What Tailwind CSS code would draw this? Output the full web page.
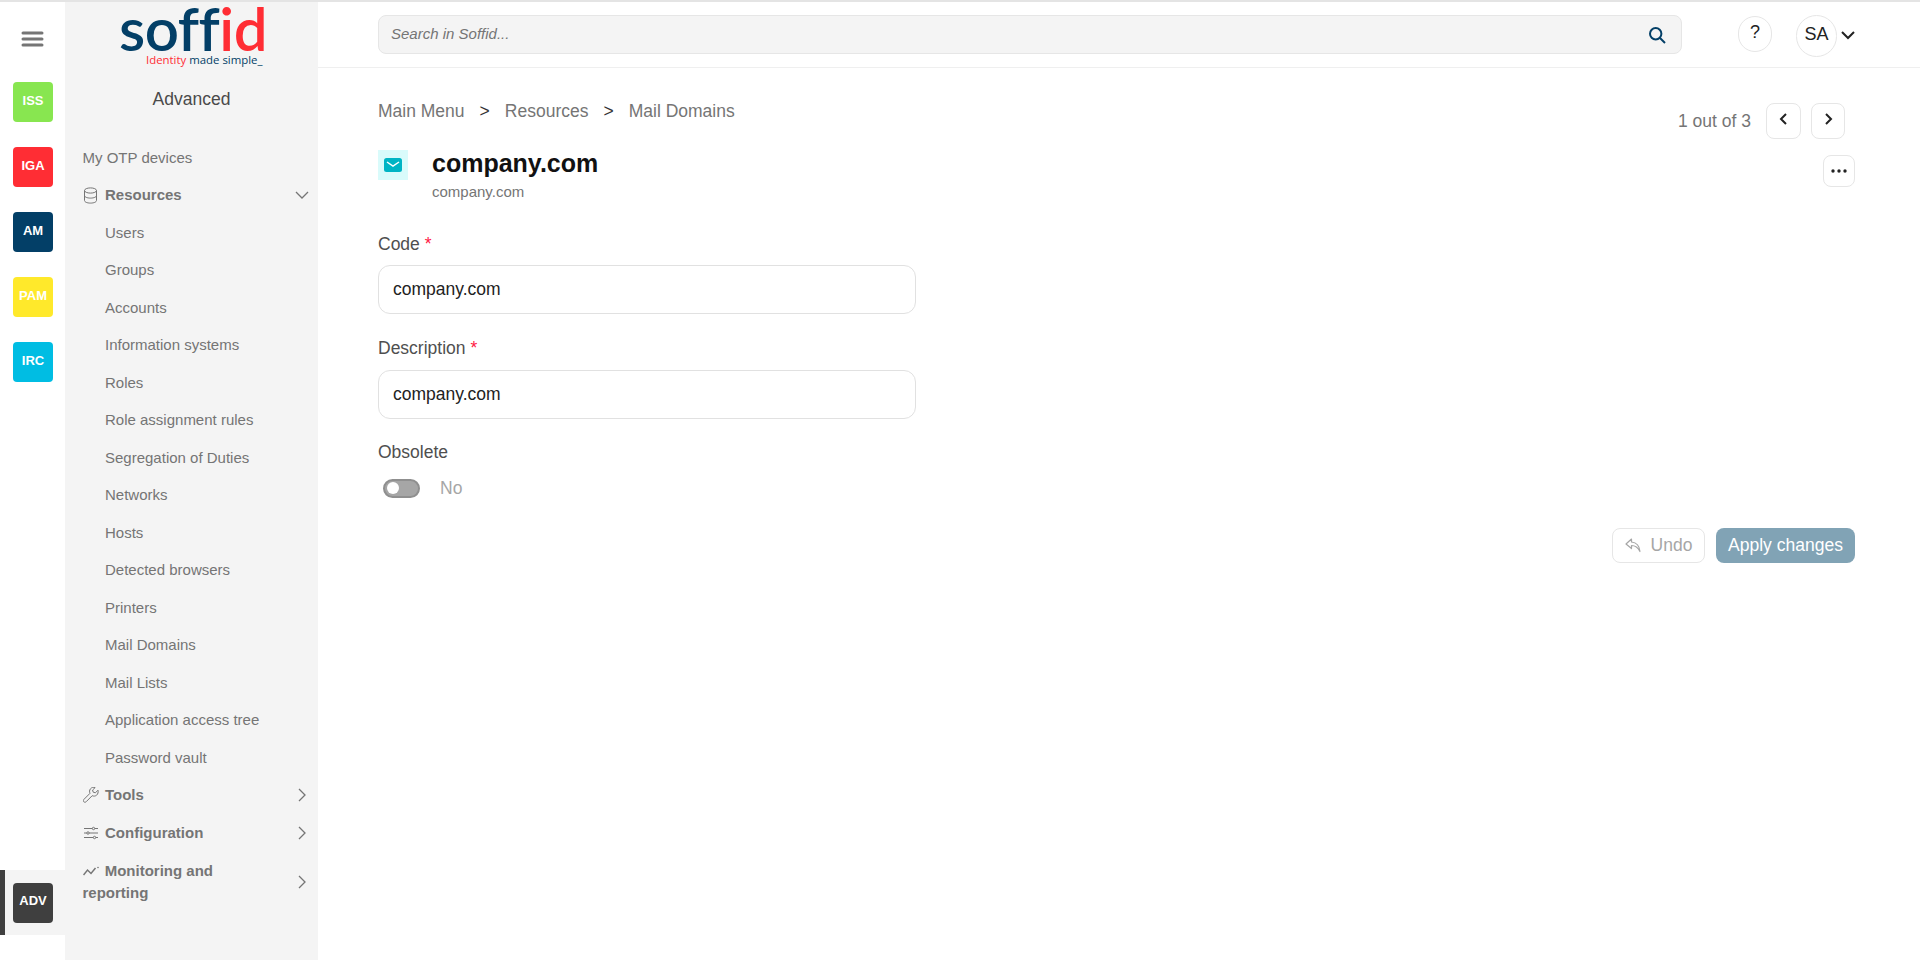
<!DOCTYPE html>
<html lang="en">
<head>
  <meta charset="UTF-8" />
  <title>Soffid - Mail Domains</title>
  <script src="https://cdn.jsdelivr.net/npm/@tailwindcss/browser@4"></script>
</head>
<body class="h-[960px] overflow-hidden bg-white font-['Liberation_Sans',Arial,sans-serif]">
  <div class="flex h-[960px] border-t-2 border-[#e4e4e4]">

    <!-- module rail -->
    <div class="w-[65px] shrink-0 flex flex-col pb-[25px]">
      <button class="h-[35px] mt-[19px] mb-[26px] flex items-center justify-center">
        <svg width="23" height="16" viewBox="0 0 23 16" fill="none" stroke="#757575" stroke-width="3" stroke-linecap="round"><path d="M2 2h19M2 8h19M2 14h19"/></svg>
      </button>
      <div class="flex flex-col gap-[25px] pl-[13px] text-[13px] font-bold text-white">
        <div class="w-10 h-10 rounded-[4px] bg-[#88e650] flex items-center justify-center pb-[3px]">ISS</div>
        <div class="w-10 h-10 rounded-[4px] bg-[#ff2d34] flex items-center justify-center pb-[3px]">IGA</div>
        <div class="w-10 h-10 rounded-[4px] bg-[#033f67] flex items-center justify-center pb-[3px]">AM</div>
        <div class="w-10 h-10 rounded-[4px] bg-[#ffe92b] flex items-center justify-center pb-[3px]">PAM</div>
        <div class="w-10 h-10 rounded-[4px] bg-[#00bde3] flex items-center justify-center pb-[3px]">IRC</div>
      </div>
      <div class="mt-auto h-[65px] bg-[#f4f4f4] border-l-[5px] border-[#3f3f3f] pl-2 flex items-center">
        <div class="w-10 h-10 rounded-[4px] bg-[#3f3f3f] flex items-center justify-center pb-[3px] text-[13px] font-bold text-white">ADV</div>
      </div>
    </div>

    <!-- sidebar -->
    <div class="w-[253px] shrink-0 bg-[#f4f4f4] text-[15px] text-[#757575]">
      <div class="h-[64px] relative">
        <div class="absolute left-[54px] top-[1px] font-['Lato',sans-serif] font-semibold text-[60px] leading-[50px] tracking-[-0.5px] text-[#033f67]">soff<span class="text-[#ff2d34]">id</span></div>
        <div class="absolute left-[81px] top-[51px] font-['Open_Sans',sans-serif] text-[11.4px] leading-[14px] whitespace-nowrap text-[#033f67]"><span class="text-[#ff2d34]">Identity</span> made simple_</div>
      </div>
      <div class="mt-[21px] text-center text-[17.5px] leading-[24px] text-[#4a4a4a]">Advanced</div>

      <div class="mt-[28px] pl-[17.5px]">
        <div class="h-[37.5px] flex items-center">My OTP devices</div>
        <div class="h-[37.5px] flex items-center font-bold">
          <svg class="w-[15px] h-[17px] mr-[7.5px]" viewBox="0 0 15 17" fill="none" stroke="#757575" stroke-width="1"><ellipse cx="7.5" cy="3.5" rx="6" ry="2.6"/><path d="M1.5 3.5v10c0 1.5 2.7 2.6 6 2.6s6-1.1 6-2.6v-10M1.5 8.5c0 1.5 2.7 2.6 6 2.6s6-1.1 6-2.6"/></svg>
          Resources
          <svg class="ml-auto mr-[9px]" width="14" height="8" viewBox="0 0 14 8" fill="none" stroke="#757575" stroke-width="1.3"><path d="M1 1l6 6 6-6"/></svg>
        </div>
        <div class="pl-[22.5px] flex flex-col">
          <div class="h-[37.5px] flex items-center">Users</div>
          <div class="h-[37.5px] flex items-center">Groups</div>
          <div class="h-[37.5px] flex items-center">Accounts</div>
          <div class="h-[37.5px] flex items-center">Information systems</div>
          <div class="h-[37.5px] flex items-center">Roles</div>
          <div class="h-[37.5px] flex items-center">Role assignment rules</div>
          <div class="h-[37.5px] flex items-center">Segregation of Duties</div>
          <div class="h-[37.5px] flex items-center">Networks</div>
          <div class="h-[37.5px] flex items-center">Hosts</div>
          <div class="h-[37.5px] flex items-center">Detected browsers</div>
          <div class="h-[37.5px] flex items-center">Printers</div>
          <div class="h-[37.5px] flex items-center">Mail Domains</div>
          <div class="h-[37.5px] flex items-center">Mail Lists</div>
          <div class="h-[37.5px] flex items-center">Application access tree</div>
          <div class="h-[37.5px] flex items-center">Password vault</div>
        </div>
        <div class="h-[37.5px] flex items-center font-bold">
          <svg class="w-[16px] h-[16px] mr-[6.5px]" viewBox="0 0 16 16" fill="none" stroke="#757575" stroke-width="1"><path d="M15 3.2l-2.6 2.6-2.2-.6-.6-2.2L12.200 .5c-1.800-.5-3.800 0-4.800 1.400-1 1.300-1.100 3-.4 4.400L1 12.300c-.8.800-.8 1.800-.2 2.500.7.600 1.700.6 2.400-.1l6-6c1.400.7 3.100.5 4.400-.5 1.300-1.100 1.900-3.100 1.400-5z"/></svg>
          Tools
          <svg class="ml-auto mr-[12px]" width="8" height="14" viewBox="0 0 8 14" fill="none" stroke="#757575" stroke-width="1.3"><path d="M1 1l6 6-6 6"/></svg>
        </div>
        <div class="h-[37.5px] flex items-center font-bold">
          <svg class="w-[16px] h-[14px] mr-[6.5px]" viewBox="0 0 16 14" fill="none" stroke="#757575" stroke-width="1"><path d="M1 2.500h14M1 7h14M1 11.500h14"/><circle cx="10.500" cy="2.500" r="1.200" fill="#f4f4f4"/><circle cx="5" cy="7" r="1.200" fill="#f4f4f4"/><circle cx="11.500" cy="11.500" r="1.200" fill="#f4f4f4"/></svg>
          Configuration
          <svg class="ml-auto mr-[12px]" width="8" height="14" viewBox="0 0 8 14" fill="none" stroke="#757575" stroke-width="1.3"><path d="M1 1l6 6-6 6"/></svg>
        </div>
        <div class="flex items-center pt-[8px] font-bold leading-[22px]">
          <div class="w-[200px]">
            <svg class="inline w-[16px] h-[10px] mr-[2px] align-[0px]" viewBox="0 0 16 10" fill="none" stroke="#757575" stroke-width="1.500"><path d="M.5 9l4-5 3.500 3.500 4.500-5.500"/><circle cx="15" cy="1.500" r=".8" fill="#757575" stroke="none"/></svg>
            Monitoring and reporting
          </div>
          <svg class="ml-auto mr-[12px]" width="8" height="14" viewBox="0 0 8 14" fill="none" stroke="#757575" stroke-width="1.3"><path d="M1 1l6 6-6 6"/></svg>
        </div>
      </div>
    </div>

    <!-- main -->
    <div class="flex-1 min-w-0 flex flex-col">
      <div class="h-[66px] border-b border-[#efefef] pl-[60px] pr-[65px] flex items-start">
        <div class="w-[1304px] h-[39px] mt-[13px] rounded-[8px] border border-[#e6e6e6] bg-[#f4f4f4] pl-[12px] pr-[15px] flex items-center justify-between">
          <span class="text-[15px] italic text-[#757575]">Search in Soffid...</span>
          <svg width="18" height="18" viewBox="0 0 18 18" fill="none" stroke="#033f67" stroke-width="2"><circle cx="7.700" cy="7.700" r="5.700"/><path d="M12 12l5 5"/></svg>
        </div>
        <div class="w-[34px] h-[36px] mt-[14px] ml-[56px] rounded-full border border-[#e6e6e6] flex items-center justify-center pb-1 text-[18px] text-[#222]">?</div>
        <div class="w-[41px] h-[42px] mt-[13px] ml-[24px] rounded-full border border-[#e6e6e6] flex items-center justify-center pb-1 text-[18px] text-[#222]">SA</div>
        <svg class="mt-[29px] ml-[4px]" width="14" height="9" viewBox="0 0 14 9" fill="none" stroke="#222" stroke-width="2"><path d="M1 1l6 6 6-6"/></svg>
      </div>

      <div class="pl-[60px] pr-[65px]">
        <div class="flex justify-between">
          <div class="mt-[31px] flex items-start gap-[15px] text-[17.5px] leading-[24px] text-[#757575]">
            <span>Main Menu</span><span class="text-[#333]">&gt;</span><span>Resources</span><span class="text-[#333]">&gt;</span><span>Mail Domains</span>
          </div>
          <div class="mt-[35px] mr-[10px] flex items-center text-[17.5px] text-[#757575]">
            <span class="pr-[15px]">1 out of 3</span>
            <button class="w-[35px] h-[36px] rounded-[8px] border border-[#e6e6e6] flex items-center justify-center pb-1"><svg width="9" height="12" viewBox="0 0 9 12" fill="none" stroke="#222" stroke-width="2"><path d="M7 1L2 6l5 5"/></svg></button>
            <button class="w-[34px] h-[36px] ml-[10px] rounded-[8px] border border-[#e6e6e6] flex items-center justify-center pb-1"><svg width="9" height="12" viewBox="0 0 9 12" fill="none" stroke="#222" stroke-width="2"><path d="M2 1l5 5-5 5"/></svg></button>
          </div>
        </div>

        <div class="flex mt-[10px]">
          <div class="w-[30px] h-[30px] mt-px bg-[#d9fbfb] flex items-center justify-center">
            <svg width="18" height="14" viewBox="0 0 18 14"><rect width="18" height="14" rx="2.500" fill="#00b4c4"/><path d="M3 4l6 4 6-4" fill="none" stroke="#fff" stroke-width="1.500"/></svg>
          </div>
          <div class="ml-[24px]">
            <div class="text-[25px] leading-[28px] font-bold text-[#111]">company.com</div>
            <div class="mt-[6px] text-[15px] leading-[18px] text-[#757575]">company.com</div>
          </div>
          <button class="ml-auto w-[32px] h-[32px] mt-[6px] rounded-[8px] border border-[#e6e6e6] flex items-center justify-center">
            <svg width="16" height="4" viewBox="0 0 16 4" fill="#222"><circle cx="2" cy="2" r="1.700"/><circle cx="8" cy="2" r="1.700"/><circle cx="14" cy="2" r="1.700"/></svg>
          </button>
        </div>

        <div class="w-[538px] text-[17.5px]">
          <div class="mt-[31px] leading-[24px] text-[#4f4f4f]">Code <span class="text-[#ff1744]">*</span></div>
          <input value="company.com" class="mt-[9px] w-full h-[49px] px-[14px] rounded-[12px] border border-[#e1e1e1] text-[#222] outline-none" />
          <div class="mt-[22px] leading-[24px] text-[#4f4f4f]">Description <span class="text-[#ff1744]">*</span></div>
          <input value="company.com" class="mt-[10px] w-full h-[49px] px-[14px] rounded-[12px] border border-[#e1e1e1] text-[#222] outline-none" />
          <div class="mt-[21px] leading-[24px] text-[#4f4f4f]">Obsolete</div>
          <div class="mt-[12px] pl-[5px] flex items-center">
            <div class="w-[37px] h-[19px] rounded-full bg-[#a6a6a6] border-[2px] border-[#8f8f8f] flex items-center pl-[2px]"><div class="w-[12px] h-[12px] rounded-full bg-white"></div></div>
            <span class="ml-[20px] leading-[24px] text-[#a6a6a6]">No</span>
          </div>
        </div>

        <div class="mt-[28px] flex justify-end gap-[11px] text-[17.5px]">
          <button class="w-[93px] h-[35px] rounded-[8px] border border-[#e6e6e6] flex items-center justify-center gap-[10px] text-[#a6a6a6]">
            <svg width="16" height="15" viewBox="0 0 16 15" fill="none" stroke="#a6a6a6" stroke-width="1.200" stroke-linejoin="round"><path d="M6.500 1L1 6l5.500 4.500V7.500c3.500 0 6 1 8.500 6-.5-5-3-9-8.500-9.500z"/></svg>
            Undo
          </button>
          <button class="w-[139px] h-[35px] rounded-[8px] bg-[#81a3b5] text-white">Apply changes</button>
        </div>
      </div>
    </div>
  </div>
</body>
</html>
